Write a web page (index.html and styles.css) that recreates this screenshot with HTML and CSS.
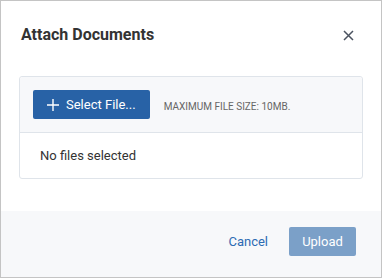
FILE: index.html
```html
<!DOCTYPE html>
<html>
<head>
    <meta charset="UTF-8">
    <title>Attach Documents</title>
    <link rel="stylesheet" href="styles.css">
</head>
<body>

<div class="dialog">
    <!-- Заголовок -->
    <div class="dialog-header">
        <h1 class="dialog-title">Attach Documents</h1>
        <button class="close-btn" type="button" aria-label="Close">
            <svg width="11" height="11" viewBox="0 0 11 11">
                <path d="M1 1 L10 10 M10 1 L1 10" stroke="#4b5360" stroke-width="1.5" fill="none"/>
            </svg>
        </button>
    </div>

    <!-- Выбор файлов -->
    <div class="dialog-body">
        <div class="upload-panel">
            <div class="upload-toolbar">
                <button class="select-btn" type="button">
                    <svg width="12" height="12" viewBox="0 0 12 12">
                        <path d="M6 0 V12 M0 6 H12" stroke="#fff" stroke-width="1.4" fill="none"/>
                    </svg>
                    <span>Select File...</span>
                </button>
                <span class="max-size">MAXIMUM FILE SIZE: 10MB.</span>
            </div>
            <div class="file-list">No files selected</div>
        </div>
    </div>

    <!-- Кнопки -->
    <div class="dialog-footer">
        <button class="cancel-btn" type="button">Cancel</button>
        <button class="upload-btn" type="button" disabled>Upload</button>
    </div>
</div>

</body>
</html>
```

FILE: styles.css
```css
body {
    margin: 0;
    font-family: Roboto, "Liberation Sans", Arial, sans-serif;
    background-color: #fff;
}
.dialog {
    width: 380px;
    height: 276px;
    border: 1px solid #c4c4c4;
    display: flex;
    flex-direction: column;
    background-color: #fff;
}
.dialog-header {
    display: flex;
    align-items: center;
    justify-content: space-between;
    padding: 22px 21px 29px 20px;
}
.dialog-title {
    margin: 0;
    font-size: 16px;
    line-height: 20px;
    font-weight: 700;
    color: #333;
}
.close-btn {
    width: 24px;
    height: 24px;
    padding: 0;
    border: none;
    background: none;
    display: flex;
    align-items: center;
    justify-content: center;
    cursor: pointer;
}
.dialog-body {
    padding: 0 18px 32px 18px;
}
.upload-panel {
    border: 1px solid #dfe4ea;
    border-radius: 3px;
}
.upload-toolbar {
    display: flex;
    align-items: center;
    padding: 13px;
    background-color: #f7f8fa;
    border-bottom: 1px solid #dfe4ea;
    border-radius: 3px 3px 0 0;
}
.select-btn {
    display: flex;
    align-items: center;
    gap: 7px;
    height: 29px;
    padding: 0 14px;
    border: none;
    border-radius: 2px;
    background-color: #2862a6;
    color: #fff;
    font-family: inherit;
    font-size: 13px;
    cursor: pointer;
}
.max-size {
    margin-left: 14px;
    padding-top: 3px;
    font-size: 10px;
    color: #666;
}
.file-list {
    padding: 14px 20px;
    font-size: 13px;
    line-height: 17px;
    color: #333;
}
.dialog-footer {
    flex: 1;
    display: flex;
    align-items: flex-start;
    justify-content: flex-end;
    padding: 16px 25px 0 0;
    background-color: #f7f8fa;
}
.cancel-btn {
    height: 29px;
    margin-right: 21px;
    padding: 0;
    border: none;
    background: none;
    color: #2c6bb3;
    font-family: inherit;
    font-size: 13px;
    cursor: pointer;
}
.upload-btn {
    width: 67px;
    height: 29px;
    border: none;
    border-radius: 2px;
    background-color: #7ba0c8;
    color: #fff;
    font-family: inherit;
    font-size: 13px;
}
```
